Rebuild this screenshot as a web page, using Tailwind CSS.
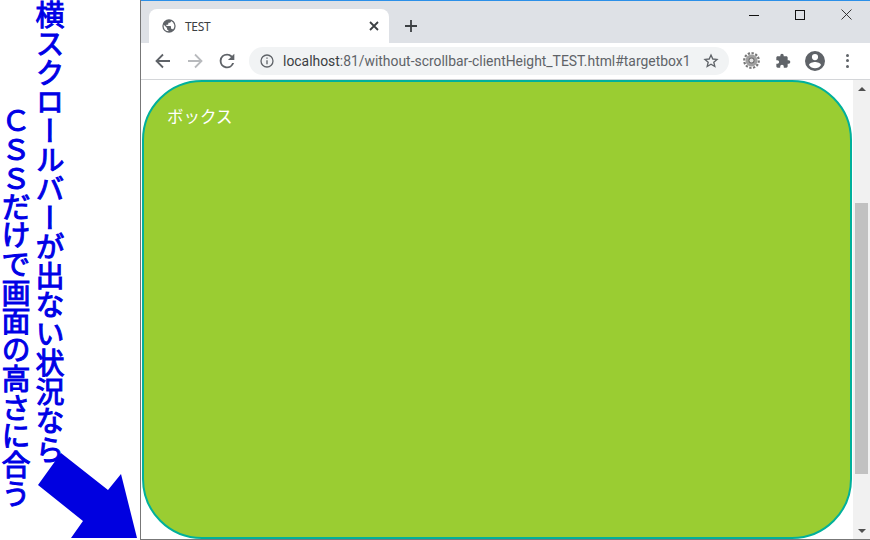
<!DOCTYPE html>
<html lang="ja">
<head>
  <meta charset="UTF-8" />
  <title>TEST</title>
  <script src="https://cdn.jsdelivr.net/npm/@tailwindcss/browser@4"></script>
</head>
<body class="bg-white overflow-hidden font-['Roboto','Noto_Sans_CJK_JP',sans-serif]">
  <div class="flex w-[870px] h-[540px]">

    <!-- 左の注釈 -->
    <div class="relative w-[140px] h-full shrink-0 font-['Noto_Sans_CJK_JP',sans-serif] text-[#0000e6] text-[29px] leading-none font-normal [-webkit-text-stroke:1px_#0000e6]">
      <svg class="absolute left-0 top-0" width="140" height="540" viewBox="0 0 140 540">
        <polygon fill="#0000e0" points="137,538 121,474 108,490 61,453 38,485 83,521 71,538"/>
      </svg>
      <div class="absolute left-[35px] top-[0px] [writing-mode:vertical-rl]">横スクロールバーが出ない状況なら</div>
      <div class="absolute left-[1px] top-[106px] [writing-mode:vertical-rl] tracking-[-0.3px]">ＣＳＳだけで画面の高さに合う</div>
    </div>

    <!-- ブラウザ -->
    <div class="flex-1 flex flex-col border-l border-b border-[#777777] border-t-0 min-w-0">
      <div class="h-px bg-[#2b8fe8]"></div>

      <!-- タブ -->
      <div class="relative h-[42px] bg-[#dee1e6] flex items-end pl-2 shrink-0">
        <div class="w-[240px] h-[34px] bg-white rounded-t-lg flex items-center pl-[12px] pr-[10px]">
          <svg width="16" height="16" viewBox="0 0 24 24" fill="#5f6368"><path d="M12 2a10 10 0 1 0 0 20 10 10 0 0 0 0-20zM4 12c0-.6.1-1.200.2-1.800L9 15v1c0 1.100.9 2 2 2v1.900A8 8 0 0 1 4 12zm13.900 5.400c-.3-.8-1-1.400-1.900-1.400h-1v-3c0-.6-.4-1-1-1H8v-2h2c.6 0 1-.4 1-1V7h2c1.100 0 2-.9 2-2v-.4a8 8 0 0 1 2.900 12.800z"/></svg>
          <span class="ml-[8px] mt-[2px] text-xs text-[#3c4043] font-['Noto_Sans'] tracking-[-0.3px]">TEST</span>
          <svg class="ml-auto" width="10" height="10" viewBox="0 0 10 10" stroke="#3c4043" stroke-width="1.800"><path d="M1 1l8 8M9 1l-8 8"/></svg>
        </div>
        <svg class="ml-[16px] mb-[11px]" width="12" height="12" viewBox="0 0 12 12" stroke="#3c4043" stroke-width="1.800"><path d="M6 0v12M0 6h12"/></svg>
        <!-- ウィンドウボタン -->
        <div class="absolute right-[18px] top-[8px] flex items-center gap-[36px]">
          <svg width="10" height="10" viewBox="0 0 10 10" stroke="#111" stroke-width="1"><path d="M0 5.500h10"/></svg>
          <svg width="10" height="10" viewBox="0 0 10 10" fill="none" stroke="#111" stroke-width="1"><rect x="0.500" y="0.500" width="9" height="9"/></svg>
          <svg width="11" height="11" viewBox="0 0 11 11" stroke="#222" stroke-width="0.900"><path d="M0.500 0.500l10 10M10.500 0.500l-10 10"/></svg>
        </div>
      </div>

      <!-- ツールバー -->
      <div class="h-[37px] bg-white border-b border-[#d4d6d9] flex items-center shrink-0 pb-[1px]">
        <svg class="ml-[14px]" width="16" height="16" viewBox="0 0 16 16" fill="none" stroke="#5f6368" stroke-width="1.800"><path d="M15 8H2M8 1.500L1.500 8 8 14.500"/></svg>
        <svg class="ml-[16px]" width="16" height="16" viewBox="0 0 16 16" fill="none" stroke="#b8babd" stroke-width="1.800"><path d="M1 8h13M8 1.500L14.500 8 8 14.500"/></svg>
        <svg class="ml-[16px]" width="16" height="16" viewBox="0 0 24 24" fill="#5f6368"><path d="M19.800 4.200A11 11 0 0 0 12 1a11 11 0 1 0 10.600 14h-2.900A8.200 8.200 0 1 1 12 3.800c2.300 0 4.300.9 5.800 2.400L13.400 10.600H23V1z"/></svg>
        <div class="ml-[14px] w-[480px] h-[28px] rounded-full bg-[#f1f3f4] flex items-center pl-[11px] pr-[10px]">
          <svg width="14" height="14" viewBox="0 0 14 14" fill="none" stroke="#5f6368" stroke-width="1.300"><circle cx="7" cy="7" r="6"/><path d="M7 6.200v4M7 3.400v1.400"/></svg>
          <span class="ml-[9px] mt-px text-[13.900px] whitespace-nowrap text-[#5f6368] font-['Roboto']"><span class="text-[#3c4043]">localhost</span>:81/without-scrollbar-clientHeight_TEST.html#targetbox1</span>
          <svg class="ml-auto shrink-0" width="16" height="16" viewBox="0 0 24 24" fill="none" stroke="#5f6368" stroke-width="2"><path d="M12 3l2.700 6 6.300.6-4.800 4.200 1.500 6.400L12 16.800l-5.700 3.400 1.500-6.400L3 9.600 9.300 9z"/></svg>
        </div>
        <div class="ml-[6px] flex items-center">
          <div class="w-8 flex justify-center">
            <svg width="17" height="17" viewBox="0 0 17 17"><circle cx="8.500" cy="8.500" r="7.300" fill="none" stroke="#777777" stroke-width="2.200" stroke-dasharray="2.300 1.500"/><circle cx="8.500" cy="8.500" r="6" fill="#a0a0a0"/><circle cx="8.500" cy="8.500" r="3" fill="#6e6e6e"/><circle cx="8.500" cy="8.500" r="2" fill="#e4e4e4"/></svg>
          </div>
          <div class="w-8 flex justify-center">
            <svg width="16" height="16" viewBox="0 0 24 24" fill="#5f6368"><path d="M20.500 11H19V7c0-1.100-.9-2-2-2h-4V3.500a2.500 2.500 0 0 0-5 0V5H4c-1.100 0-2 .9-2 2v3.800h1.500a2.700 2.700 0 0 1 0 5.400H2V20c0 1.100.9 2 2 2h3.800v-1.500a2.700 2.700 0 0 1 5.400 0V22H17c1.100 0 2-.9 2-2v-4h1.500a2.500 2.500 0 0 0 0-5z"/></svg>
          </div>
          <div class="w-8 flex justify-center">
            <svg width="24" height="24" viewBox="0 0 24 24" fill="#5f6368"><path d="M12 2a10 10 0 1 0 0 20 10 10 0 0 0 0-20zm0 3a3 3 0 1 1 0 6.200A3 3 0 0 1 12 5zm0 14.200a7.200 7.200 0 0 1-6-3.200c0-2 4-3.100 6-3.100s6 1.100 6 3.100a7.200 7.200 0 0 1-6 3.200z"/></svg>
          </div>
          <div class="w-8 flex flex-col items-center gap-[2.500px]">
            <div class="w-[3px] h-[3px] rounded-full bg-[#5f6368]"></div>
            <div class="w-[3px] h-[3px] rounded-full bg-[#5f6368]"></div>
            <div class="w-[3px] h-[3px] rounded-full bg-[#5f6368]"></div>
          </div>
        </div>
      </div>

      <!-- ページ -->
      <div class="flex-1 flex min-h-0 bg-white">
        <div class="flex-1 min-w-0 pl-px">
          <div class="h-full bg-[#9acd32] border-2 border-[#00b09b] rounded-[60px] pl-[23px] pt-[21px] text-white text-[16.500px] leading-[27px] font-['Noto_Sans_CJK_JP',sans-serif]">ボックス</div>
        </div>
        <!-- スクロールバー -->
        <div class="w-[17px] bg-[#f1f1f1] flex flex-col items-center shrink-0 ml-px">
          <div class="h-[17px] flex items-center justify-center">
            <div class="w-0 h-0 border-x-[4px] border-x-transparent border-b-[4px] border-b-[#505050]"></div>
          </div>
          <div class="w-[13px] h-[271px] mt-[106px] bg-[#c1c1c1]"></div>
          <div class="mt-auto h-[17px] flex items-center justify-center">
            <div class="w-0 h-0 border-x-[4px] border-x-transparent border-t-[4px] border-t-[#505050]"></div>
          </div>
        </div>
      </div>
    </div>
  </div>
</body>
</html>
